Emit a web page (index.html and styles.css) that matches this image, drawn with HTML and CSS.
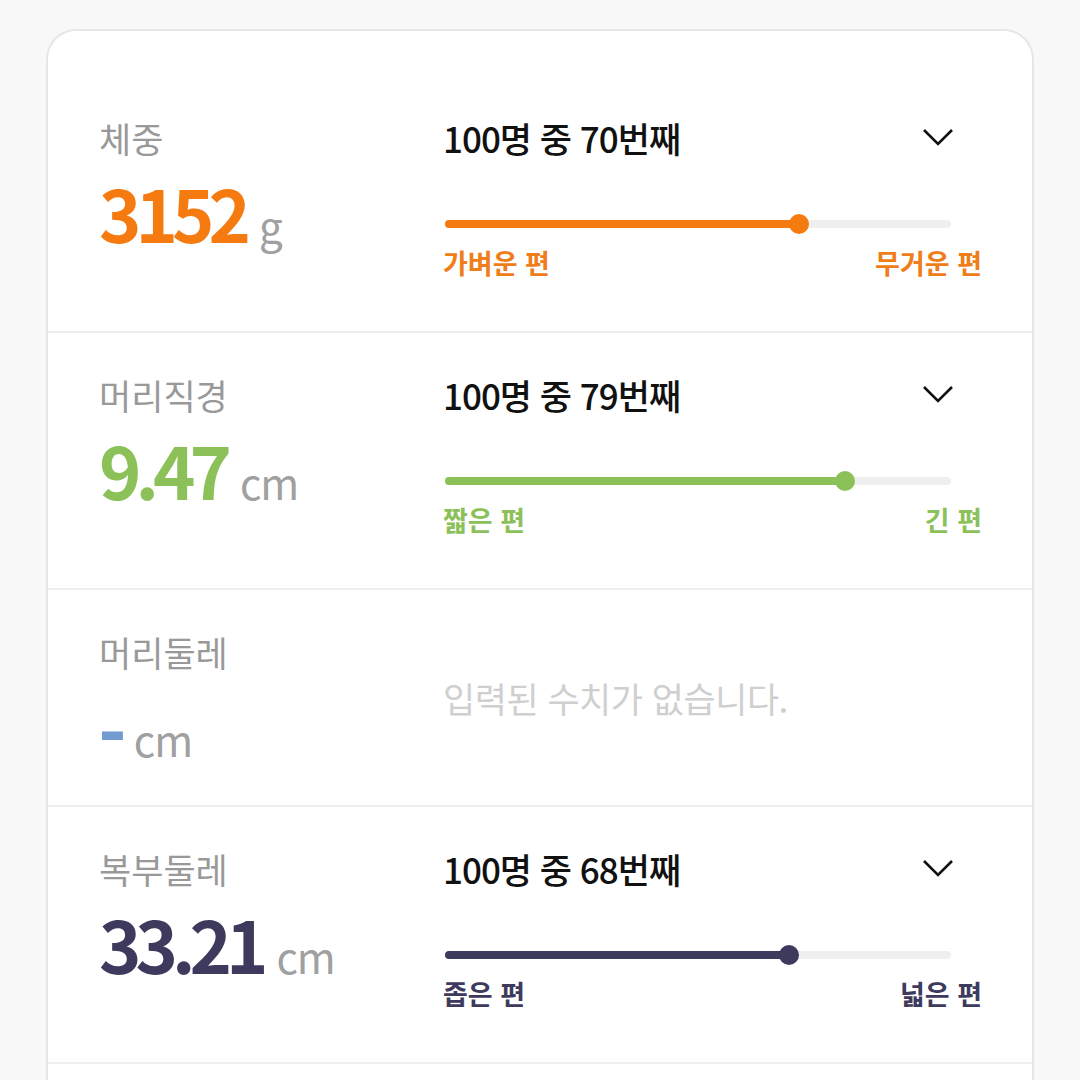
FILE: index.html
```html
<!DOCTYPE html>
<html lang="ko">
<head>
    <meta charset="UTF-8">
    <meta name="viewport" content="width=device-width, initial-scale=1.0">
    <title>성장 기록</title>
    <link rel="stylesheet" href="styles.css">
</head>
<body>
    <div class="card">
        <div class="row">
            <div class="measure">
                <div class="label">체중</div>
                <div class="value orange">3152<span class="unit">g</span></div>
            </div>
            <div class="rank">
                <div class="rank-head">
                    <span class="rank-text">100명 중 70번째</span>
                    <svg class="chevron" width="32" height="18" viewBox="0 0 32 18"><path d="M2 2 L16 16 L30 2" fill="none" stroke="#111" stroke-width="2.6"/></svg>
                </div>
                <div class="track"><div class="fill bg-orange" style="width: 70%"></div></div>
                <div class="ends orange">
                    <span>가벼운 편</span>
                    <span>무거운 편</span>
                </div>
            </div>
        </div>

        <div class="row">
            <div class="measure">
                <div class="label">머리직경</div>
                <div class="value green">9.47<span class="unit">cm</span></div>
            </div>
            <div class="rank">
                <div class="rank-head">
                    <span class="rank-text">100명 중 79번째</span>
                    <svg class="chevron" width="32" height="18" viewBox="0 0 32 18"><path d="M2 2 L16 16 L30 2" fill="none" stroke="#111" stroke-width="2.6"/></svg>
                </div>
                <div class="track"><div class="fill bg-green" style="width: 79%"></div></div>
                <div class="ends green">
                    <span>짧은 편</span>
                    <span>긴 편</span>
                </div>
            </div>
        </div>

        <div class="row row-empty">
            <div class="measure">
                <div class="label">머리둘레</div>
                <div class="value"><span class="dash">-</span><span class="unit">cm</span></div>
            </div>
            <div class="rank">
                <div class="empty">입력된 수치가 없습니다.</div>
            </div>
        </div>

        <div class="row">
            <div class="measure">
                <div class="label">복부둘레</div>
                <div class="value navy">33.21<span class="unit">cm</span></div>
            </div>
            <div class="rank">
                <div class="rank-head">
                    <span class="rank-text">100명 중 68번째</span>
                    <svg class="chevron" width="32" height="18" viewBox="0 0 32 18"><path d="M2 2 L16 16 L30 2" fill="none" stroke="#111" stroke-width="2.6"/></svg>
                </div>
                <div class="track"><div class="fill bg-navy" style="width: 68%"></div></div>
                <div class="ends navy">
                    <span>좁은 편</span>
                    <span>넓은 편</span>
                </div>
            </div>
        </div>

        <div class="row"></div>
    </div>
</body>
</html>
```

FILE: styles.css
```css
body {
    margin: 0;
    background: #f8f8f8;
    font-family: "Noto Sans CJK KR", "Noto Sans", sans-serif;
}
.card {
    margin: 29px 46px 0;
    padding-top: 45px;
    background: #fff;
    border: 2px solid #e6e6e6;
    border-bottom: none;
    border-radius: 30px 30px 0 0;
}
.row {
    display: flex;
    padding: 42px 50px 0 51px;
    height: 213px;
    border-bottom: 2px solid #eeeeee;
}
.row-empty {
    height: 173px;
}
.measure {
    width: 344px;
    flex-shrink: 0;
}
.label {
    font-size: 35px;
    line-height: 40px;
    color: #999;
}
.value {
    margin-top: 14px;
    font-size: 72px;
    line-height: 80px;
    font-weight: 700;
    letter-spacing: -6px;
}
.unit {
    margin-left: 14px;
    font-size: 42px;
    font-weight: 400;
    color: #a0a0a0;
    letter-spacing: -1px;
}
.dash {
    color: #729bd0;
    letter-spacing: 0;
    vertical-align: -6px;
    -webkit-text-stroke: 1px #729bd0;
}
.dash + .unit {
    margin-left: 8px;
}
.rank {
    flex: 1;
}
.rank-head {
    display: flex;
    justify-content: space-between;
    align-items: center;
    height: 40px;
    padding-right: 28px;
}
.rank-text {
    font-size: 35px;
    line-height: 40px;
    font-weight: 500;
    color: #111;
    letter-spacing: -1px;
}
.chevron {
    margin-top: -2px;
}
.track {
    margin: 62px 31px 0 2px;
    height: 8px;
    border-radius: 4px;
    background: #efefef;
}
.fill {
    position: relative;
    height: 8px;
    border-radius: 4px;
}
.fill::after {
    content: "";
    position: absolute;
    right: -10px;
    top: -6px;
    width: 20px;
    height: 20px;
    border-radius: 50%;
    background: inherit;
}
.ends {
    display: flex;
    justify-content: space-between;
    margin-top: 20px;
    font-size: 27px;
    line-height: 30px;
    font-weight: 700;
}
.empty {
    margin-top: 46px;
    font-size: 35px;
    line-height: 40px;
    color: #cfcfcf;
    letter-spacing: -0.5px;
}
.orange { color: #f57a10; }
.green { color: #8cc15a; }
.navy { color: #3e3a5d; }
.bg-orange { background: #f57a10; }
.bg-green { background: #8cc15a; }
.bg-navy { background: #3e3a5d; }
.ends.orange { color: #ef7d1a; }
```
